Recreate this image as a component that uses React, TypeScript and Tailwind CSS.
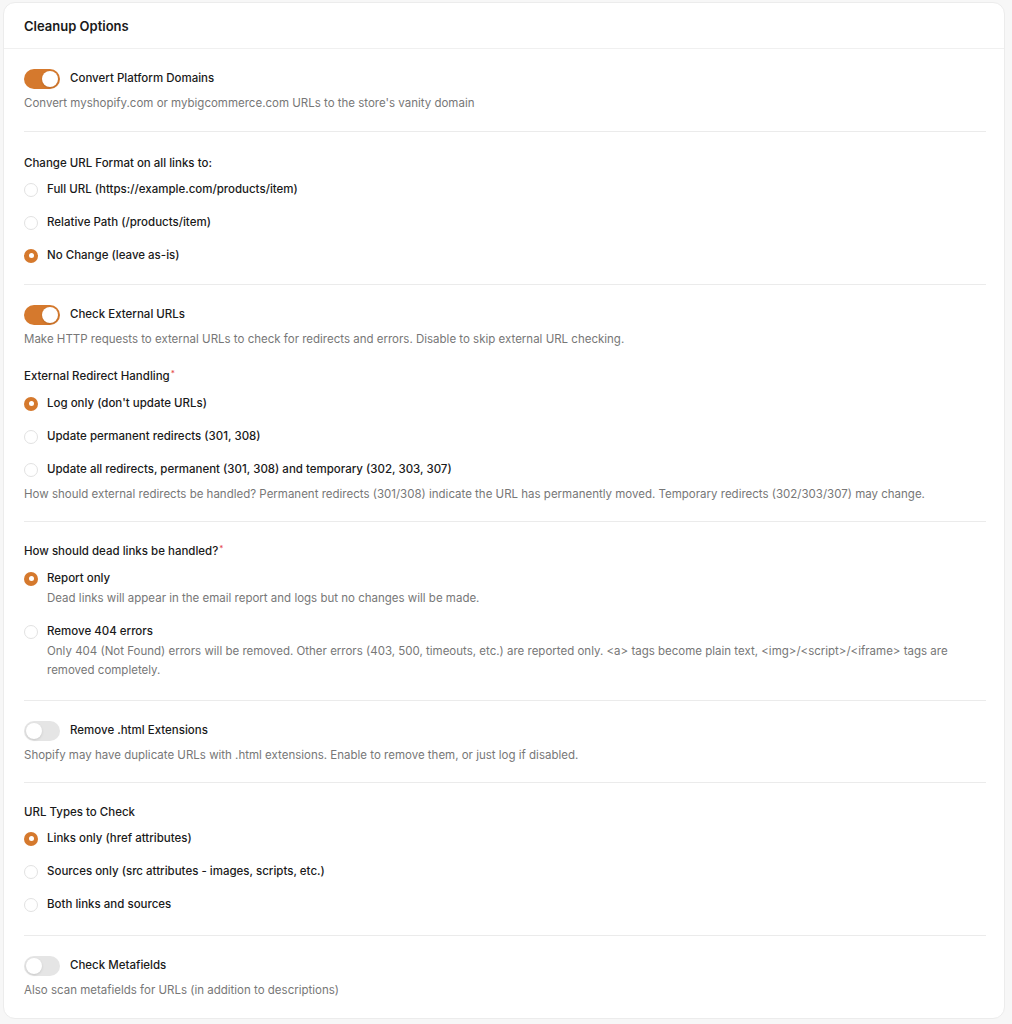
import React, { useState } from "react";

const font = { fontFamily: "Inter, 'Noto Sans', sans-serif" };

function Toggle({ on, onClick }: { on: boolean; onClick: () => void }) {
  return (
    <button
      onClick={onClick}
      className={`relative h-5 w-9 shrink-0 rounded-full transition ${on ? "bg-[#d5792d]" : "bg-[#e5e5e5]"}`}
    >
      <span
        className={`absolute top-[2px] h-4 w-4 rounded-full bg-white shadow-sm transition ${on ? "left-[18px]" : "left-[2px]"}`}
      />
    </button>
  );
}

function Radio({ checked }: { checked: boolean }) {
  return checked ? (
    <span className="flex h-[14px] w-[14px] shrink-0 items-center justify-center rounded-full bg-[#d5792d]">
      <span className="h-[5px] w-[5px] rounded-full bg-white" />
    </span>
  ) : (
    <span className="h-[14px] w-[14px] shrink-0 rounded-full border border-[#e2e2e2] bg-white" />
  );
}

type Opt = { label: string; desc?: string };

function RadioGroup({
  options,
  value,
  onChange,
}: {
  options: Opt[];
  value: number;
  onChange: (i: number) => void;
}) {
  return (
    <div className="flex flex-col">
      {options.map((o, i) => (
        <div
          key={o.label}
          className={`cursor-pointer ${o.desc ? "py-[7.5px]" : "py-[8px]"} first:pt-0 last:pb-0`}
          onClick={() => onChange(i)}
        >
          <div className="flex h-[17px] items-center gap-[9px]">
            <Radio checked={value === i} />
            <span className="text-[11.5px] font-medium text-[#1a1a1a]">{o.label}</span>
          </div>
          {o.desc && (
            <p className="mt-[2px] pl-[23px] text-[11.5px] leading-[19px] text-[#777777]">{o.desc}</p>
          )}
        </div>
      ))}
    </div>
  );
}

function ToggleRow({
  label,
  desc,
  on,
  onClick,
}: {
  label: string;
  desc: string;
  on: boolean;
  onClick: () => void;
}) {
  return (
    <div>
      <div className="flex items-center gap-[10px]">
        <Toggle on={on} onClick={onClick} />
        <span className="text-[11.5px] font-medium text-[#1a1a1a]">{label}</span>
      </div>
      <p className="mt-[5px] text-[11.5px] leading-[18px] text-[#777777]">{desc}</p>
    </div>
  );
}

function Heading({ children, required }: { children: React.ReactNode; required?: boolean }) {
  return (
    <div className={`${required ? "mb-[10.5px]" : "mb-[9px]"} h-[18px] text-[11.5px] font-medium leading-[18px] text-[#1a1a1a]`}>
      {children}
      {required && <span className="relative -top-[4px] ml-[1px] text-[8px] leading-none text-[#e5484d]">*</span>}
    </div>
  );
}

export default function App() {
  const [domains, setDomains] = useState(true);
  const [format, setFormat] = useState(2);
  const [external, setExternal] = useState(true);
  const [redirect, setRedirect] = useState(0);
  const [dead, setDead] = useState(0);
  const [html, setHtml] = useState(false);
  const [types, setTypes] = useState(0);
  const [meta, setMeta] = useState(false);

  return (
    <div style={font} className="min-h-screen bg-[#f7f7f7] pl-[3px] pr-[7px] pt-[2px] pb-[6px]">
      <div className="rounded-xl border border-[#ececec] bg-white">
        <div className="border-b border-[#f0f0f0] pl-5 pr-[18px] pt-[14px] pb-[13px]">
          <h1 className="text-[13px] font-semibold leading-[18px] text-[#1a1a1a]">Cleanup Options</h1>
        </div>

        <div className="pl-5 pr-[18px]">
          <div className="border-b border-[#ebebeb] pt-[20px] pb-[19px]">
            <ToggleRow
              label="Convert Platform Domains"
              desc="Convert myshopify.com or mybigcommerce.com URLs to the store's vanity domain"
              on={domains}
              onClick={() => setDomains(!domains)}
            />
          </div>

          <div className="border-b border-[#ebebeb] pt-[22px] pb-[19.5px]">
            <Heading>Change URL Format on all links to:</Heading>
            <RadioGroup
              value={format}
              onChange={setFormat}
              options={[
                { label: "Full URL (https://example.com/products/item)" },
                { label: "Relative Path (/products/item)" },
                { label: "No Change (leave as-is)" },
              ]}
            />
          </div>

          <div className="border-b border-[#ebebeb] pt-[20px] pb-[18px]">
            <ToggleRow
              label="Check External URLs"
              desc="Make HTTP requests to external URLs to check for redirects and errors. Disable to skip external URL checking."
              on={external}
              onClick={() => setExternal(!external)}
            />
            <div className="mt-[19px]">
              <Heading required>External Redirect Handling</Heading>
              <RadioGroup
                value={redirect}
                onChange={setRedirect}
                options={[
                  { label: "Log only (don't update URLs)" },
                  { label: "Update permanent redirects (301, 308)" },
                  { label: "Update all redirects, permanent (301, 308) and temporary (302, 303, 307)" },
                ]}
              />
              <p className="mt-[6.5px] text-[11.5px] leading-[18px] text-[#777777]">
                How should external redirects be handled? Permanent redirects (301/308) indicate the URL has permanently
                moved. Temporary redirects (302/303/307) may change.
              </p>
            </div>
          </div>

          <div className="border-b border-[#ebebeb] pt-[20px] pb-[20px]">
            <Heading required>How should dead links be handled?</Heading>
            <RadioGroup
              value={dead}
              onChange={setDead}
              options={[
                {
                  label: "Report only",
                  desc: "Dead links will appear in the email report and logs but no changes will be made.",
                },
                {
                  label: "Remove 404 errors",
                  desc: "Only 404 (Not Found) errors will be removed. Other errors (403, 500, timeouts, etc.) are reported only. <a> tags become plain text, <img>/<script>/<iframe> tags are removed completely.",
                },
              ]}
            />
          </div>

          <div className="border-b border-[#ebebeb] pt-[20px] pb-[18px]">
            <ToggleRow
              label="Remove .html Extensions"
              desc="Shopify may have duplicate URLs with .html extensions. Enable to remove them, or just log if disabled."
              on={html}
              onClick={() => setHtml(!html)}
            />
          </div>

          <div className="border-b border-[#ebebeb] pt-[20px] pb-[21.5px]">
            <Heading>URL Types to Check</Heading>
            <RadioGroup
              value={types}
              onChange={setTypes}
              options={[
                { label: "Links only (href attributes)" },
                { label: "Sources only (src attributes - images, scripts, etc.)" },
                { label: "Both links and sources" },
              ]}
            />
          </div>

          <div className="pt-[20px] pb-[19px]">
            <ToggleRow
              label="Check Metafields"
              desc="Also scan metafields for URLs (in addition to descriptions)"
              on={meta}
              onClick={() => setMeta(!meta)}
            />
          </div>
        </div>
      </div>
    </div>
  );
}
